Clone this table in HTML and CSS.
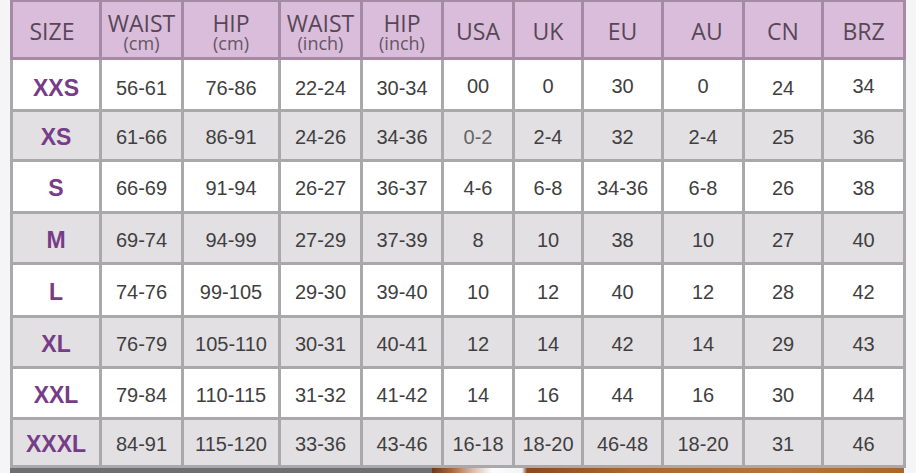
FILE: index.html
```html
<!DOCTYPE html>
<html>
<head>
<meta charset="utf-8">
<link rel="stylesheet" href="styles.css">
</head>
<body>
<div class="chart">
  <div class="head">
    <div class="h first">SIZE</div>
    <div class="h two"><span>WAIST</span><small>(cm)</small></div>
    <div class="h two"><span>HIP</span><small>(cm)</small></div>
    <div class="h two"><span>WAIST</span><small>(inch)</small></div>
    <div class="h two"><span>HIP</span><small>(inch)</small></div>
    <div class="h">USA</div>
    <div class="h">UK</div>
    <div class="h">EU</div>
    <div class="h au">AU</div>
    <div class="h">CN</div>
    <div class="h">BRZ</div>
  </div>
  <div class="body">
    <div class="c r1 sz">XXS</div><div class="c r1">56-61</div><div class="c r1">76-86</div><div class="c r1">22-24</div><div class="c r1">30-34</div><div class="c">00</div><div class="c">0</div><div class="c">30</div><div class="c">0</div><div class="c r1">24</div><div class="c">34</div>
    <div class="c g sz">XS</div><div class="c g">61-66</div><div class="c g">86-91</div><div class="c g">24-26</div><div class="c g">34-36</div><div class="c g lt">0-2</div><div class="c g">2-4</div><div class="c g">32</div><div class="c g">2-4</div><div class="c g">25</div><div class="c g">36</div>
    <div class="c sz">S</div><div class="c">66-69</div><div class="c">91-94</div><div class="c">26-27</div><div class="c">36-37</div><div class="c">4-6</div><div class="c">6-8</div><div class="c">34-36</div><div class="c">6-8</div><div class="c">26</div><div class="c">38</div>
    <div class="c g sz">M</div><div class="c g">69-74</div><div class="c g">94-99</div><div class="c g">27-29</div><div class="c g">37-39</div><div class="c g">8</div><div class="c g">10</div><div class="c g">38</div><div class="c g">10</div><div class="c g">27</div><div class="c g">40</div>
    <div class="c sz">L</div><div class="c">74-76</div><div class="c">99-105</div><div class="c">29-30</div><div class="c">39-40</div><div class="c">10</div><div class="c">12</div><div class="c">40</div><div class="c">12</div><div class="c">28</div><div class="c">42</div>
    <div class="c g sz">XL</div><div class="c g">76-79</div><div class="c g">105-110</div><div class="c g">30-31</div><div class="c g">40-41</div><div class="c g">12</div><div class="c g">14</div><div class="c g">42</div><div class="c g">14</div><div class="c g">29</div><div class="c g">43</div>
    <div class="c sz">XXL</div><div class="c">79-84</div><div class="c">110-115</div><div class="c">31-32</div><div class="c">41-42</div><div class="c">14</div><div class="c">16</div><div class="c">44</div><div class="c">16</div><div class="c">30</div><div class="c">44</div>
    <div class="c g sz">XXXL</div><div class="c g">84-91</div><div class="c g">115-120</div><div class="c g">33-36</div><div class="c g">43-46</div><div class="c g">16-18</div><div class="c g">18-20</div><div class="c g">46-48</div><div class="c g">18-20</div><div class="c g">31</div><div class="c g">46</div>
  </div>
  <div class="strip">
    <div class="dark"></div>
    <div class="photo"></div>
  </div>
</div>
</body>
</html>
```

FILE: styles.css
```css
* { box-sizing: border-box; }
html, body { margin: 0; padding: 0; }
body {
  background: #f5f5f7;
  width: 916px;
  height: 473px;
  overflow: hidden;
}
.chart {
  margin-left: 10px;
  width: 896px;
}
.head, .body {
  display: grid;
  grid-template-columns: 86px 79px 94px 79px 78px 68px 66px 77px 78px 76px 79px;
  gap: 3px;
}
.head {
  background: #a58aa3;
  padding: 2px 3px 3px;
  grid-template-rows: 55px;
}
.body {
  background: #a9a8ab;
  padding: 0 3px 3px;
  grid-template-rows: 49px 47px 49px 48px 50px 48px 48px 45px;
}
.h {
  background: #dabdda;
  color: #574757;
  font-family: "Open Sans", sans-serif;
  font-size: 23px;
  display: flex;
  flex-direction: column;
  align-items: center;
  justify-content: center;
  padding-top: 4px;
  line-height: 1;
}
.h.first { padding-right: 8px; }
.h.au { padding-left: 8px; }
.h.two { padding-top: 5px; }
.h.two span { line-height: 21px; }
.h.two small {
  font-size: 18px;
  line-height: 18px;
  color: #655565;
}
.c {
  background: #ffffff;
  color: #3f3f3f;
  font-family: "Liberation Sans", Arial, sans-serif;
  font-size: 20px;
  display: flex;
  align-items: center;
  justify-content: center;
  padding-top: 4px;
}
.c.r1 { padding-top: 8px; }
.c.g { background: #e3e0e4; }
.c.lt { color: #666; }
.c.sz {
  color: #773c87;
  font-weight: bold;
  font-size: 23px;
}
.strip {
  display: flex;
  height: 6px;
}
.dark {
  width: 422px;
  background: #6f6f70;
}
.photo {
  flex: 1;
  margin-right: 2px;
  background: linear-gradient(to right, #6a3a1e 0px, #a8683e 20px, #d9b8a8 40px, #fbfbfb 60px, #f4f4f4 90px, #8a4a22 95px, #a8682e 200px, #b4763a 350px, #a8682c 470px);
}
```
